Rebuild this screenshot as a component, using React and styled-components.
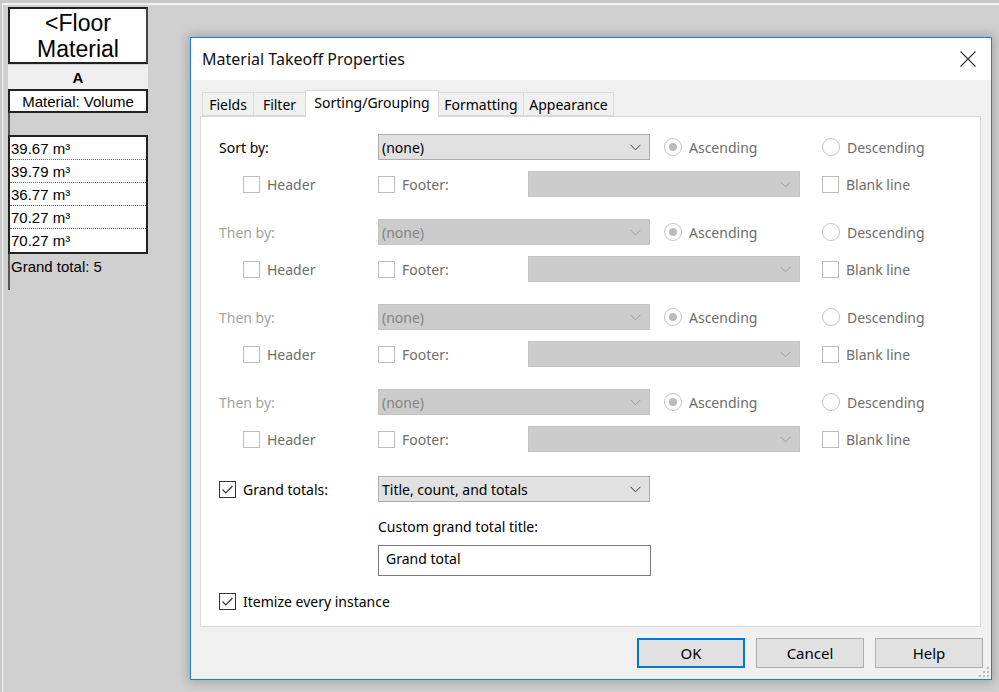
import React from 'react'
import styled, { createGlobalStyle } from 'styled-components'

const GlobalStyle = createGlobalStyle`
  html, body {
    margin: 0;
    padding: 0;
    width: 100%;
    height: 100%;
    overflow: hidden;
  }
  * { box-sizing: border-box; }
`

const Screen = styled.div`
  width: 999px;
  height: 692px;
  background: #c8c8c8;
  padding: 3px 0 0 2px;
`

const Workspace = styled.div`
  display: flex;
  align-items: flex-start;
  height: 100%;
  background: #d0d0d0;
  border-top: 2px solid #f4f4f4;
  border-left: 1px solid #f4f4f4;
  padding: 2px 0 0 5px;
`

/* ---------- schedule on the left ---------- */

const Schedule = styled.div`
  width: 140px;
  display: flex;
  flex-direction: column;
  font-family: "Liberation Sans", Arial, sans-serif;
  color: #000;
`

const ScheduleTitle = styled.div`
  height: 57px;
  background: #fff;
  border: 2px solid #222;
  border-right-color: #444;
  display: flex;
  align-items: center;
  justify-content: center;
  text-align: center;
  font-size: 23px;
  line-height: 26px;
`

const ColumnLetter = styled.div`
  height: 24px;
  margin-top: 1px;
  background: #efefef;
  display: flex;
  align-items: center;
  justify-content: center;
  font-weight: bold;
  font-size: 15px;
`

const ColumnHeader = styled.div`
  height: 24px;
  background: #fff;
  border: 2px solid #222;
  display: flex;
  align-items: center;
  justify-content: center;
  font-size: 15px;
`

const Spacer = styled.div`
  height: ${p => p.$h}px;
  border-left: 2px solid #555;
`

const DataBox = styled.div`
  background: #fff;
  border: 2px solid #222;
`

const DataRow = styled.div`
  height: 23px;
  padding-left: 1px;
  display: flex;
  align-items: center;
  font-size: 15px;
  border-bottom: 1px dotted #666;
  &:last-child { border-bottom: none; }
`

const GrandTotalLine = styled.div`
  height: 24px;
  padding-left: 1px;
  display: flex;
  align-items: center;
  font-size: 15px;
  border-left: 2px solid #555;
`

/* ---------- dialog ---------- */

const Dialog = styled.div`
  position: relative;
  width: 802px;
  height: 643px;
  margin: 30px 0 0 42px;
  background: #f0f0f0;
  border: 1px solid #1d7fd6;
  box-shadow: 0 0 10px 2px rgba(0, 0, 0, 0.22);
  display: flex;
  flex-direction: column;
  font-family: "Noto Sans", "Open Sans", sans-serif;
  font-size: 14px;
  color: #000;
`

const TitleBar = styled.div`
  height: 42px;
  background: #fff;
  display: flex;
  align-items: center;
  justify-content: space-between;
  padding: 0 15px 0 11px;
  font-size: 16px;
  color: #111;
`

const Body = styled.div`
  flex: 1;
  display: flex;
  flex-direction: column;
  padding: 0 10px 0 9px;
`

const TabRow = styled.div`
  display: flex;
  align-items: flex-end;
  height: 36px;
  padding-left: 3px;
`

const Tab = styled.div`
  width: ${p => p.$w}px;
  height: ${p => (p.$active ? 27 : 24)}px;
  margin-bottom: ${p => (p.$active ? -1 : 0)}px;
  position: relative;
  z-index: ${p => (p.$active ? 2 : 1)};
  background: ${p => (p.$active ? '#fff' : '#f0f0f0')};
  border: 1px solid #d9d9d9;
  border-bottom: ${p => (p.$active ? 'none' : '1px solid #d9d9d9')};
  margin-left: -1px;
  display: flex;
  align-items: center;
  justify-content: center;
  padding-bottom: ${p => (p.$active ? 3 : 0)}px;
`

const Panel = styled.div`
  height: 511px;
  background: #fff;
  border: 1px solid #d9d9d9;
  padding: 17px 0 0 18px;
  display: flex;
  flex-direction: column;
`

const Group = styled.div`
  display: flex;
  flex-direction: column;
  gap: 11px;
  margin-bottom: 22px;
`

const Row = styled.div`
  display: flex;
  align-items: center;
  height: ${p => p.$h || 26}px;
  padding-left: ${p => p.$indent || 0}px;
  margin-top: ${p => p.$mt || 0}px;
`

const Cell = styled.div`
  width: ${p => p.$w}px;
  flex-shrink: 0;
  display: flex;
  align-items: center;
  gap: 7px;
  color: ${p => p.$color || '#000'};
`

const Select = styled.div`
  width: 272px;
  height: 26px;
  flex-shrink: 0;
  display: flex;
  align-items: center;
  justify-content: space-between;
  padding: 0 8px 0 3px;
  background: ${p => (p.$disabled ? '#cccccc' : '#e1e1e1')};
  border: 1px solid ${p => (p.$disabled ? '#c4c4c4' : '#adadad')};
  color: ${p => (p.$disabled ? '#838383' : '#000')};
  margin-right: ${p => p.$mr || 0}px;
`

const Box = styled.span`
  width: 17px;
  height: 17px;
  flex-shrink: 0;
  background: #fff;
  border: 1px solid ${p => (p.$disabled ? '#bcbcbc' : '#333')};
  display: inline-flex;
  align-items: center;
  justify-content: center;
`

const Radio = styled.span`
  width: 18px;
  height: 18px;
  flex-shrink: 0;
  border-radius: 50%;
  background: #fff;
  border: 1px solid #c4c4c4;
  display: inline-flex;
  align-items: center;
  justify-content: center;
  &::after {
    content: '';
    display: ${p => (p.$checked ? 'block' : 'none')};
    width: 8px;
    height: 8px;
    border-radius: 50%;
    background: #bcbcbc;
  }
`

const Indent = styled.div`
  margin-left: 159px;
`

const Caption = styled.div`
  height: 20px;
  display: flex;
  align-items: center;
  margin-top: 14px;
`

const TextBox = styled.div`
  width: 273px;
  height: 31px;
  margin-top: 9px;
  background: #fff;
  border: 1px solid #7a7a7a;
  display: flex;
  align-items: center;
  padding-left: 7px;
  padding-bottom: 5px;
`

const Footer = styled.div`
  display: flex;
  justify-content: flex-end;
  gap: 11px;
  padding: 11px 0 0 0;
  margin-right: -2px;
`

const Button = styled.div`
  width: 108px;
  height: 30px;
  background: #e1e1e1;
  border: ${p => (p.$default ? '2px solid #0078d7' : '1px solid #adadad')};
  display: flex;
  align-items: center;
  justify-content: center;
  font-size: 15px;
`

const Grip = styled.svg`
  position: absolute;
  right: 2px;
  bottom: 2px;
`

const Chevron = ({ disabled }) => (
  <svg width="11" height="7" viewBox="0 0 11 7">
    <path d="M0.5 0.8 L5.5 5.8 L10.5 0.8" fill="none" stroke={disabled ? '#9c9c9c' : '#333'} strokeWidth="1" />
  </svg>
)

const Check = () => (
  <svg width="13" height="11" viewBox="0 0 13 11">
    <path d="M1.5 5.5 L4.8 8.8 L11.5 2" fill="none" stroke="#333" strokeWidth="1.2" />
  </svg>
)

const CloseIcon = () => (
  <svg width="16" height="16" viewBox="0 0 16 16">
    <path d="M0.5 0.5 L15.5 15.5 M15.5 0.5 L0.5 15.5" stroke="#333" strokeWidth="1.1" />
  </svg>
)

const tabs = [
  { label: 'Fields', w: 52 },
  { label: 'Filter', w: 53 },
  { label: 'Sorting/Grouping', w: 134, active: true },
  { label: 'Formatting', w: 86 },
  { label: 'Appearance', w: 91 },
]

const volumes = ['39.67 m³', '39.79 m³', '36.77 m³', '70.27 m³', '70.27 m³']

function SortGroup({ first }) {
  const labelColor = first ? '#000' : '#a3a3a3'
  return (
    <Group>
      <Row>
        <Cell $w={159} $color={labelColor}>{first ? 'Sort by:' : 'Then by:'}</Cell>
        <Select $disabled={!first} $mr={14}>
          <span>(none)</span>
          <Chevron disabled={!first} />
        </Select>
        <Cell $w={158} $color="#6d6d6d"><Radio $checked />Ascending</Cell>
        <Cell $w={120} $color="#6d6d6d"><Radio />Descending</Cell>
      </Row>
      <Row $indent={24}>
        <Cell $w={135} $color="#6d6d6d"><Box $disabled />Header</Cell>
        <Cell $w={150} $color="#6d6d6d"><Box $disabled />Footer:</Cell>
        <Select $disabled $mr={22}>
          <span />
          <Chevron disabled />
        </Select>
        <Cell $w={120} $color="#6d6d6d"><Box $disabled />Blank line</Cell>
      </Row>
    </Group>
  )
}

export default function App() {
  return (
    <Screen>
      <GlobalStyle />
      <Workspace>
        <Schedule>
          <ScheduleTitle>&lt;Floor<br />Material</ScheduleTitle>
          <ColumnLetter>A</ColumnLetter>
          <ColumnHeader>Material: Volume</ColumnHeader>
          <Spacer $h={22} />
          <DataBox>
            {volumes.map((v, i) => <DataRow key={i}>{v}</DataRow>)}
          </DataBox>
          <GrandTotalLine>Grand total: 5</GrandTotalLine>
          <Spacer $h={12} />
        </Schedule>

        <Dialog>
          <TitleBar>
            <span>Material Takeoff Properties</span>
            <CloseIcon />
          </TitleBar>
          <Body>
            <TabRow>
              {tabs.map(t => (
                <Tab key={t.label} $w={t.w} $active={t.active}>{t.label}</Tab>
              ))}
            </TabRow>
            <Panel>
              <SortGroup first />
              <SortGroup />
              <SortGroup />
              <SortGroup />
              <Row $mt={2}>
                <Cell $w={159}><Box><Check /></Box>Grand totals:</Cell>
                <Select>
                  <span>Title, count, and totals</span>
                  <Chevron />
                </Select>
              </Row>
              <Indent>
                <Caption>Custom grand total title:</Caption>
                <TextBox>Grand total</TextBox>
              </Indent>
              <Row $mt={12}>
                <Cell $w={300}><Box><Check /></Box>Itemize every instance</Cell>
              </Row>
            </Panel>
            <Footer>
              <Button $default>OK</Button>
              <Button>Cancel</Button>
              <Button>Help</Button>
            </Footer>
          </Body>
          <Grip width="10" height="10" viewBox="0 0 10 10">
            <rect x="8" y="0" width="2" height="2" fill="#bdbdbd" />
            <rect x="4" y="4" width="2" height="2" fill="#bdbdbd" />
            <rect x="8" y="4" width="2" height="2" fill="#bdbdbd" />
            <rect x="0" y="8" width="2" height="2" fill="#bdbdbd" />
            <rect x="4" y="8" width="2" height="2" fill="#bdbdbd" />
            <rect x="8" y="8" width="2" height="2" fill="#bdbdbd" />
          </Grip>
        </Dialog>
      </Workspace>
    </Screen>
  )
}
